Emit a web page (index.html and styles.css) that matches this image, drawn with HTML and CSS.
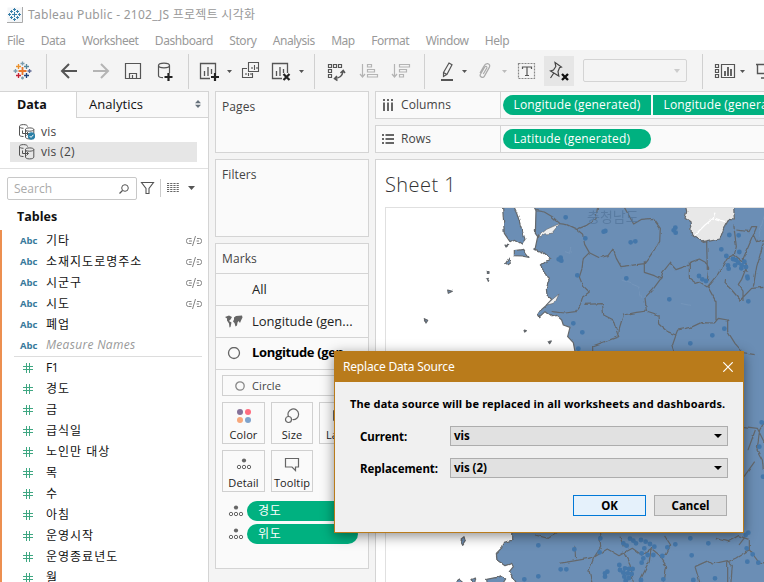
FILE: index.html
```html
<!DOCTYPE html>
<html lang="ko">
<head>
<meta charset="utf-8">
<title>Tableau Public - 2102_JS 프로젝트 시각화</title>
<link rel="stylesheet" href="styles.css">
</head>
<body>
<svg width="0" height="0" class="defs">
  <symbol id="unlink" viewBox="0 0 18 10"><path d="M6.500 2.500H3.500a2 2 0 0 0-2 2v1a2 2 0 0 0 2 2H6.500M4 5h3M12 2.500h2.500a2 2 0 0 1 2 2v1a2 2 0 0 1-2 2H12M11.500 5h2.500M10.500 0L7.500 10" fill="none" stroke="#777" stroke-width=".9"/></symbol>
  <symbol id="hash" viewBox="0 0 10 10"><path d="M3.500 0v10M6.500 0v10M0 3.500h10M0 6.500h10" fill="none" stroke="#3fa782"/></symbol>
  <symbol id="detail" viewBox="0 0 16 12"><circle cx="8" cy="2.500" r="2.100" fill="#666"/><g fill="none" stroke="#666"><circle cx="3" cy="9" r="1.700"/><circle cx="8" cy="9" r="1.700"/><circle cx="13" cy="9" r="1.700"/></g></symbol>
  <symbol id="source" viewBox="0 0 16 16"><g fill="none" stroke="#555"><path d="M4.500 12.500C2 12.500.5 12 .5 11V2.500C.5 1.300 2 .6 4.500.6s4 .7 4 1.900M.5 2.500c0 1 1.500 1.800 4 1.800"/><path d="M6.500 5.500c0-1 1.600-1.600 4-1.600s4.300.6 4.300 1.600v7.500c0 1.200-1.800 1.900-4.300 1.900s-4-.7-4-1.900V5.500c0 1 1.600 1.700 4 1.700s4.300-.7 4.300-1.700M3.500 6.500v3h6M7.500 7.500l2 2-2 2"/></g></symbol>
</svg>

<header class="titlebar">
  <svg width="16" height="16" viewBox="0 0 16 16"><rect x=".5" y=".5" width="15" height="15" fill="#f4f6f8"/><path d="M15.500 0v15.500H0" fill="none" stroke="#aaa"/><path d="M7.500 5v5M5 7.500h5M7.500 1v3M6 2.500h3M7.500 11v3M6 12.500h3M2.500 6v3M1 7.500h3M12.500 6v3M11 7.500h3M4.500 3v3M3 4.500h3M10.500 3v3M9 4.500h3M4.500 9v3M3 10.500h3M10.500 9v3M9 10.500h3" stroke="#3a80aa" fill="none"/></svg>
  <span class="title">Tableau Public - 2102_JS 프로젝트 시각화</span>
</header>
<nav class="menu"><span>File</span><span>Data</span><span>Worksheet</span><span>Dashboard</span><span>Story</span><span>Analysis</span><span>Map</span><span>Format</span><span>Window</span><span>Help</span></nav>

<div class="toolbar">
  <svg width="46" height="41" viewBox="0 50 46 41"><g fill="none" stroke-width="1.300"><path d="M22.500 67v8M18.500 71h8" stroke="#e8762c" stroke-width="1.800"/><path d="M18.500 64v5M16 66.500h5" stroke="#eb912c"/><path d="M26.500 64v5M24 66.500h5" stroke="#59879b"/><path d="M18.500 73v5M16 75.500h5" stroke="#c72035"/><path d="M26.500 73v5M24 75.500h5" stroke="#1f447e"/><path d="M22.500 61.500v4M20.500 63.500h4M15.500 69v4M13.500 71h4" stroke="#7b9cae"/><path d="M29.500 69v4M27.500 71h4" stroke="#5c6692"/><path d="M22.500 76.500v3M21 78h3" stroke="#7b9cae"/></g></svg>
  <i class="sep"></i>
  <svg width="141" height="41" viewBox="47 50 141 41"><g fill="none" stroke="#555"><path d="M77 71H62M69 64l-7 7 7 7" stroke-width="2"/><path d="M93 71h15M101 64l7 7-7 7" stroke="#b4b4b4" stroke-width="2"/><path d="M125.500 63.500h15v15h-15zM129.500 78v-4.500h7V78M132.500 75v3" stroke-width="1.200"/><path d="M158.500 65.500v10c0 1.400 2 2.100 4.500 2.100M169.500 65.500V73" stroke-width="1.200"/><ellipse cx="164" cy="65.500" rx="5.500" ry="2.300" stroke-width="1.200"/><path d="M168.500 73v8M164.500 77h8" stroke="#222" stroke-width="2.200"/></g></svg>
  <i class="sep"></i>
  <svg width="125" height="41" viewBox="189 50 125 41"><g fill="none" stroke="#555" stroke-width="1.300"><path d="M210 78.500h-9.500v-15h15V73M204.500 71v5M208 67v9M211.500 69v5"/><path d="M215 73v8M211 77h8" stroke="#222" stroke-width="2.200"/><path d="M248.500 62.500h10v9h-10zM247 68.500h-4.500v9h10V73M252 69v-2M254.500 70v-5M257 69v-2M246 75v-2M248.500 76v-3M251 75v-2" stroke-width="1.100"/><path d="M282 78.500h-9.500v-15h15V73M276.500 71v5M280 67v9M283.500 69v4"/><path d="M283.500 74l6 6M289.500 74l-6 6" stroke="#222" stroke-width="2.200"/></g><path d="M227 70h5l-2.500 3zM299 70h5l-2.500 3z" fill="#555"/></svg>
  <i class="sep"></i>
  <svg width="109" height="41" viewBox="315 50 109 41"><g fill="none" stroke="#555" stroke-width="1.200"><path d="M328.500 64.500h3v3h-3zM333.500 64.500h3v3h-3zM338.500 64.500h3v3h-3zM328.500 69.500h3v3h-3zM328.500 74.500h3v3h-3z"/><path d="M335 78.500c5-.5 7.500-3.500 8-7M340.500 73l2.700-2.500 1.800 2.500M337 76l-2.500 2.700 3 1.800" stroke-width="1.500"/><g stroke="#b4b4b4"><path d="M362.500 64v13M360 74l2.500 3 2.500-3M367.500 64.500h4v2.500h-4zM367.500 69.500h7V72h-7zM367.500 74.500h10V77h-10zM394.500 64v13M392 74l2.500 3 2.500-3M399.500 64.500h10V67h-10zM399.500 69.500h7V72h-7zM399.500 74.500h4V77h-4z"/></g></g></svg>
  <i class="sep"></i>
  <svg width="119" height="41" viewBox="425 50 119 41"><g fill="none" stroke="#555" stroke-width="1.200"><path d="M443.500 72.500l5.500-9.500 3 1.800-5 9.500-3.500 2.200zM443.500 72.500l3.500 2"/><path d="M441 80h12" stroke-width="2"/><path d="M480 73l4-7c1-2 2-2.600 4-2.300 2 .6 2 2.300 1.300 3.700l-5 9c-1.300 2-5 .5-4-1.900l4.500-7.500c1-1.300 2.600-.4 2 1l-3.500 6" stroke="#aaa"/><path d="M518.500 63.500h16v15h-16z" stroke="#888" stroke-dasharray="2 1"/><path d="M522.500 69v-2h9v2M527 67v8.500M525 75.500h4"/></g><path d="M462 70h5l-2.500 3z" fill="#555"/><path d="M502 70h5l-2.500 3z" fill="#bbb"/></svg>
  <svg class="pinned" width="30" height="30" viewBox="544 56 30 30"><path d="M555 62.500l6.500 4.500-2 .8-1.500 3.700.8 4.500-8.300-5 3-1 2.300-3.500zM553.500 73.500l-3 4.500" fill="none" stroke="#444" stroke-width="1.200"/><path d="M562 74l6 6M568 74l-6 6" stroke="#111" stroke-width="2.300"/></svg>
  <div class="fit"><i></i></div>
  <i class="sep"></i>
  <svg width="61" height="41" viewBox="703 50 61 41"><g fill="none" stroke="#555" stroke-width="1.200"><path d="M715.500 64.500h3v3h-3zM715.500 69.500h3v3h-3zM715.500 74.500h3v3h-3zM721.500 64.500h13v13h-13z"/><path d="M725 71v5M728 67v9M731 69v7" stroke-width="1.800"/><path d="M756 64.500h10M757.500 65v8.500h8M761 78h5" stroke-width="1.400"/></g><path d="M740 70h5l-2.500 3z" fill="#555"/></svg>
</div>

<main class="work">
  <aside class="side">
    <div class="tabs"><div class="tab on">Data</div><div class="tab off"><span>Analytics</span><svg width="6" height="8" viewBox="0 0 6 8"><path d="M0 3.300h6L3 0zM0 4.700h6L3 8z" fill="#66717b"/></svg></div></div>
    <div class="sources">
      <div class="src"><svg width="16" height="16"><use href="#source"/><circle cx="12.500" cy="12" r="3.700" fill="#2a7fa6"/><path d="M10.700 12l1.300 1.400 2.400-2.600" fill="none" stroke="#fff"/></svg><span>vis</span></div>
      <div class="src picked"><svg width="16" height="16"><use href="#source"/></svg><span>vis (2)</span></div>
    </div>
    <div class="find">
      <div class="search"><span>Search</span><svg width="10" height="10" viewBox="0 0 10 10"><circle cx="6" cy="4" r="3.300" fill="none" stroke="#555"/><path d="M3.500 6.500L.5 9.500" stroke="#555" stroke-width="1.300"/></svg></div>
      <svg width="56" height="24" viewBox="140 177 56 24"><path d="M141.500 182.500h12l-4.500 6v5h-3v-5z" fill="none" stroke="#555" stroke-width="1.100"/><path d="M160.500 179v18" stroke="#ccc"/><path d="M167 183.500h12M167 185.500h12M167 187.500h12M167 189.500h12M167 191.500h12" stroke="#666" stroke-dasharray="2.200 1"/><path d="M188 186h7l-3.500 4z" fill="#555"/></svg>
    </div>
    <div class="fields">
      <h2>Tables</h2>
      <div class="list">
        <div class="f"><b>Abc</b><span>기타</span><svg><use href="#unlink"/></svg></div>
        <div class="f"><b>Abc</b><span>소재지도로명주소</span><svg><use href="#unlink"/></svg></div>
        <div class="f"><b>Abc</b><span>시군구</span><svg><use href="#unlink"/></svg></div>
        <div class="f"><b>Abc</b><span>시도</span><svg><use href="#unlink"/></svg></div>
        <div class="f"><b>Abc</b><span>폐업</span></div>
        <div class="f"><b>Abc</b><em>Measure Names</em></div>
        <hr>
        <div class="f n"><svg><use href="#hash"/></svg><span class="lat">F1</span></div>
        <div class="f n"><svg><use href="#hash"/></svg><span>경도</span></div>
        <div class="f n"><svg><use href="#hash"/></svg><span>금</span></div>
        <div class="f n"><svg><use href="#hash"/></svg><span>급식일</span></div>
        <div class="f n"><svg><use href="#hash"/></svg><span>노인만 대상</span></div>
        <div class="f n"><svg><use href="#hash"/></svg><span>목</span></div>
        <div class="f n"><svg><use href="#hash"/></svg><span>수</span></div>
        <div class="f n"><svg><use href="#hash"/></svg><span>아침</span></div>
        <div class="f n"><svg><use href="#hash"/></svg><span>운영시작</span></div>
        <div class="f n"><svg><use href="#hash"/></svg><span>운영종료년도</span></div>
        <div class="f n"><svg><use href="#hash"/></svg><span>월</span></div>
      </div>
    </div>
  </aside>

  <section class="cards">
    <div class="card pages">Pages</div>
    <div class="card filters">Filters</div>
    <div class="card marks">
      <h3>Marks</h3>
      <div class="layer"><span>All</span></div>
      <div class="layer"><svg width="18" height="13" viewBox="0 0 18 13"><path d="M0 2l4-1.500L7 2 5.500 4.500 4 6l2.500 1.500-1 4.500-1 .5-.5-4L2 5.500 2 3.500zM9 2.500l2-1.500 6-.5.5 2-1.500 3-1 2.500-1.500-2-1 1.500-.5 3-1.500 1-1-3.500-1.500-1.500L9 4.500z" fill="#666"/></svg><span>Longitude (gen...</span></div>
      <div class="layer cur"><svg width="18" height="13" viewBox="0 0 18 13"><circle cx="9" cy="6" r="5.500" fill="none" stroke="#666" stroke-width="1.300"/></svg><span>Longitude (gen...</span></div>
      <div class="shape"><svg width="10" height="10" viewBox="0 0 10 10"><circle cx="5" cy="5" r="4.200" fill="none" stroke="#888" stroke-width="1.300"/></svg>Circle</div>
      <div class="props">
        <div><svg width="16" height="16" viewBox="0 0 16 16"><circle cx="4" cy="4" r="3" fill="#857199"/><circle cx="12" cy="4" r="3" fill="#ff6c7f"/><circle cx="4" cy="12" r="3" fill="#f7a77b"/><circle cx="12" cy="12" r="3" fill="#7fa3cc"/></svg>Color</div>
        <div><svg width="16" height="16" viewBox="0 0 16 16"><g fill="none" stroke="#666" stroke-width="1.200"><path d="M4.500 8.500a5.300 5.300 0 1 1 4 3"/><circle cx="4.500" cy="11.500" r="3"/></g></svg>Size</div>
        <div><svg width="16" height="16" viewBox="0 0 16 16"><path d="M1.500 2.500h13v10h-13z" fill="none" stroke="#666"/></svg>Label</div>
        <div><svg width="16" height="16" viewBox="0 -2 16 16"><use href="#detail" width="16" height="12"/></svg>Detail</div>
        <div><svg width="16" height="16" viewBox="0 0 16 16"><path d="M1.500 2.500h13v8.500h-3v3.500L8 11H1.500z" fill="none" stroke="#666" stroke-width="1.200"/></svg>Tooltip</div>
      </div>
      <div class="enc"><svg width="16" height="12"><use href="#detail"/></svg><span>경도</span></div>
      <div class="enc"><svg width="16" height="12"><use href="#detail"/></svg><span>위도</span></div>
    </div>
  </section>

  <section class="view">
    <div class="shelf"><div class="name"><svg width="12" height="12" viewBox="0 0 12 12"><path d="M2 0v2M2 3.500V12M6 0v2M6 3.500V12M10 0v2M10 3.500V12" stroke="#666" stroke-width="2"/></svg>Columns</div><div class="pills"><span class="pill left">Longitude (generated)</span><span class="pill mid">Longitude (generated)</span></div></div>
    <div class="shelf"><div class="name"><svg width="12" height="12" viewBox="0 0 12 12"><path d="M0 2h2M3.500 2H12M0 6h2M3.500 6H12M0 10h2M3.500 10H12" stroke="#666" stroke-width="2"/></svg>Rows</div><div class="pills"><span class="pill full">Latitude (generated)</span></div></div>
    <div class="sheet">
      <h1>Sheet 1</h1>
      <svg class="map" width="378" height="374" viewBox="386 208 378 374">
        <defs><filter id="coast" filterUnits="userSpaceOnUse" x="380" y="200" width="400" height="400" color-interpolation-filters="sRGB"><feTurbulence type="fractalNoise" baseFrequency=".16" numOctaves="1" seed="4"/><feDisplacementMap in="SourceGraphic" scale="3.500" xChannelSelector="R" yChannelSelector="G"/></filter></defs>
        <g filter="url(#coast)" stroke="#64686c" stroke-linejoin="round">
          <g transform="translate(375 170) scale(.33333)" stroke-width="3.600" fill="#6b8eb5">
            <path d="M472 100L483 122 481 190 488 200 480 238 500 246 528 267 508 278 496 288 512 310 522 330 514 355 516 375 530 388 512 408 496 422 489 432 494 440 510 425 530 440 545 436 560 450 565 465 585 472 578 500 595 518 600 545V1000H415L413 1110 385 1118 380 1134 364 1150 366 1170 390 1187 410 1180 415 1190 403 1205 425 1240V1300H1200V100z"/>
            <path d="M382 100L388 190 405 215 418 208 440 222 450 208 436 165 426 130 412 100z"/>
            <path d="M418 242l28-4 8 14 8 10-22-4-22-1zM392 280l10-16 4 16-8 5zM218 360l14 4-12 6zM148 446l10 5-5 8zM447 480l7 2-5 4zM521 517l8-4-5 8zM337 305h5v5h-5zM337 327l6-2-3 9zM390 225l8 2-5 4zM255 1110l12-10 4 14-8 12zM242 1238l12-8 10 8v10h-22zM288 1228l14-4-4 20zM335 1228l30-6 15-5 12 10-10 15h-45z"/>
            <path d="M930 100L935 125 930 145 945 155 950 195 985 217 1035 207 1050 165 1060 148 1078 150 1076 100z" fill="#e8e8e8"/>
            <path d="M490 198l25-20 40-18-25 30-22 2-16 12zM515 405l15-15 22-18-12 27z" fill="#efefef" stroke-width="2"/>
            <g fill="none">
              <path d="M483 122l25 4 25 15 22 20 20 3 30 14 30-12 28-20 6-46M605 178l18 15 6 30 14 25-18 18-4 30-8 25 10 25 20 20-20 15-8 24-14 20-30 4-41-4M643 248l30 15 26-6 15-20 10 28 14 25 30-4 40-5 18-24 28-42 2-40-22-30-34 3-24 14-28-50 2-40M808 274v33l30 10 20 10 5-20 22-28 18 20 28-10 14-12 28-10 18 10 10 20-4 38M995 215l2 85M858 325l-22 30-26 28 4 40 38 12 2 30 24 20 24 10 6-15 40-8 30-14 40 1 12-14 28 5v35l22 35 24 28 35 6M943 275v50l20 15 10-3 25 15M815 423l-30 4-40 8-12 40-2 25-50 18-28 10v20M628 403l54-2 4 34 28 14 16 50M903 495l-12 35 10 30M998 350l25 45v55M998 350l32-40 26-46 22-10 6-24-8-68M1052 325l-2 15 20 20 26 30 34-35 35-3M1078 255l32 25 2 18-12 30-10 15 14 20 0 30M1135 195l10-25-15 0-8 15-38-5M1135 195l10 20 25-6M1135 195l-30 70 10 40M1165 220l-20 70-10 60"/>
              <path d="M1165 900l-3-30-16-30 8-60 15-25 0-60 14-32M1107 920l32-45M1119 840l22-60M1107 770l40 5 20 40 30 30M1107 1105l-15 20M480 1095l40 10 30-20M552 1180l50-8 55-10 20-30-4-55M657 1162l40-25 35 20 40-22 28 20 30-20M735 1100l10 30M657 1162l-15 40 10 40M600 1130l2 42M745 1145l20 40 10 50M828 1135l-5 40-30 60M828 1135l25 20 22 35-8 45M867 1095l20 30-15 30M1020 1105l40 10 30-18 33 12 0 30-40 25-25 12 0 60M960 1190l40-18 12 10 45-10 15 15-5 60M960 1190l15 50M1123 1139l30 40 45 10"/>
              <path d="M1020 125l-5 20-25 20-30 30M1020 145l30 10" stroke="#fff"/>
              <path d="M1170 130l-20 70M740 330l50 20 10 30M850 220l-20 25M570 245l15 5 2-18M915 400l30 6" stroke="#7899bd" stroke-width="2"/>
            </g>
          </g>
        </g>
        <text class="region" x="587" y="222">충청남도</text>
        <g class="stops" transform="translate(375 170) scale(.33333)"><path d="M572 142h0M631 205h0M686 185h0M691 183h0M767 217h0M781 214h0M557 263h0M559 272h0M551 268h0M607 316h0M754 325h0M595 460h0M622 487h0M610 536h0M883 388h0M901 173h0M896 181h0M902 188h0M1063 195h0M1091 196h0M1039 238h0M1093 246h0M1054 258h0M1074 267h0M1083 270h0M1090 278h0M1080 286h0M1100 286h0M1108 275h0M1113 291h0M1099 295h0M1059 286h0M1061 296h0M1117 320h0M1118 325h0M972 318h0M982 328h0M993 333h0M1120 394h0M1048 476h0M1012 496h0M946 520h0M1160 757h0M1153 830h0M1164 920h0M490 1126h0M598 1138h0M674 1147h0M676 1105h0M557 1198h0M574 1198h0M490 1219h0M448 1228h0M745 1120h0M755 1127h0M765 1106h0M775 1112h0M783 1120h0M798 1110h0M812 1115h0M825 1122h0M838 1130h0M808 1135h0M800 1150h0M818 1155h0M835 1155h0M805 1165h0M800 1178h0M862 1158h0M877 1132h0M901 1123h0M946 1105h0M950 1156h0M1000 1120h0M1115 1135h0M1133 1153h0M1150 1178h0M1117 1175h0M1120 1088h0M1112 1095h0M733 1185h0M735 1200h0M750 1195h0M762 1197h0M773 1197h0M745 1208h0M758 1210h0M770 1212h0M748 1220h0M762 1224h0M752 1232h0M690 1210h0M697 1205h0M690 1220h0M865 1228h0M1020 1225h0M955 1230h0M798 1230h0"/></g>
      </svg>
    </div>
  </section>
</main>

<div class="dialog">
  <div class="bar"><span>Replace Data Source</span><svg width="10" height="10" viewBox="0 0 10 10"><path d="M.3.3l9.400 9.400M9.700.3L.3 9.700" stroke="#fff" stroke-width="1.200"/></svg></div>
  <p>The data source will be replaced in all worksheets and dashboards.</p>
  <div class="row"><label>Current:</label><div class="combo">vis<i></i></div></div>
  <div class="row"><label>Replacement:</label><div class="combo">vis (2)<i></i></div></div>
  <div class="actions"><button class="ok">OK</button><button>Cancel</button></div>
</div>
</body>
</html>
```
FILE: styles.css
```css
* { box-sizing: border-box; }
body {
  margin: 0; width: 764px; height: 582px; overflow: hidden; position: relative;
  display: flex; flex-direction: column; background: #fff; color: #333;
  font: 13px/16px "Open Sans", "Noto Sans CJK KR", sans-serif; white-space: nowrap;
}
h1, h2, h3, p { margin: 0; font-weight: normal; }
svg { flex: none; display: block; }
.defs { position: absolute; }

.titlebar { height: 30px; flex: none; display: flex; align-items: center; padding-left: 7px; gap: 5px; color: #999; font-size: 12px; }
.title { font-family: "Noto Sans", "Noto Sans CJK KR", sans-serif; font-weight: 400; letter-spacing: .27px; }
.menu { height: 20px; flex: none; display: flex; align-items: center; gap: 16.400px; padding: 1px 0 0 7px; color: #999; font: 12px/20px "Noto Sans", sans-serif; letter-spacing: -.45px; }
.toolbar { height: 41px; flex: none; display: flex; align-items: center; background: #f4f4f4; }
.sep { width: 1px; height: 35px; background: #d0d0d0; flex: none; margin-top: 2px; }
.pinned { background: #e6e6e6; }
.fit { width: 104px; height: 23px; margin: 0 15px 0 9px; border: 1px solid #d4d4d4; border-radius: 2px; flex: none; display: flex; justify-content: flex-end; align-items: center; padding-right: 6px; }
.fit i { border: 3px solid transparent; border-top: 4px solid #ccc; border-bottom: 0; }

.work { height: 491px; display: flex; background: #f4f4f4; }
.side { width: 209px; flex: none; background: #fff; border-right: 1px solid #d4d4d4; }
.tabs { display: flex; height: 27px; border-top: 1px solid #d4d4d4; }
.tab { height: 26px; line-height: 25px; color: #111; }
.on { width: 76px; padding-left: 17px; font-weight: 700; font-size: 12.500px; }
.off { flex: 1; border-left: 1px solid #d4d4d4; border-bottom: 1px solid #d4d4d4; background: #f9f9f9; display: flex; justify-content: space-between; align-items: center; padding: 0 7px 0 12px; letter-spacing: .05px; }
.off svg { margin-bottom: 1px; }
.sources { height: 51px; padding: 4px 11px 0 10px; border-bottom: 1px solid #e0e0e0; }
.src { height: 20px; display: flex; align-items: center; gap: 6px; padding-left: 9px; font-size: 12px; color: #444; letter-spacing: .3px; }
.picked { background: #e6e6e6; }
.find { display: flex; padding: 8px 0 0 7px; height: 32px; gap: 3px; }
.search { width: 130px; height: 23px; border: 1px solid #c8c8c8; border-radius: 2px; display: flex; justify-content: space-between; align-items: center; padding: 0 7px 0 6px; color: #aaa; font-size: 12px; }
.fields h2 { height: 29px; padding-left: 17px; font: 700 12.500px/31px "Open Sans", sans-serif; color: #111; }
.list { height: 352px; border-left: 2px solid #ec8f50; overflow: hidden; }
.f { height: 21px; display: flex; align-items: center; padding: 0 5px 0 18px; color: #111; font-size: 12px; }
.f b { width: 26px; font: 700 9.500px/20px "Open Sans", sans-serif; color: #38799b; }
.f em { font-size: 12px; color: #999; letter-spacing: .3px; padding-bottom: 1px; }
.f svg { width: 18px; height: 10px; margin-left: auto; margin-top: 1px; }
.f span { letter-spacing: 1px; }
.f .lat { letter-spacing: -.5px; }
.n svg { width: 10px; height: 10px; margin: 0 13px 0 3px; }
.list hr { height: 1px; border: 0; margin: 0 6px 0 12px; background: #ddd; }

.cards { width: 160px; flex: none; padding-left: 6px; }
.card { width: 154px; border: 1px solid #d4d4d4; background: #fafafa; font-size: 12px; color: #444; padding: 7px 6px; letter-spacing: .1px; }
.pages { height: 62px; }
.filters { height: 78px; margin: 6px 0; }
.marks { height: 326px; padding: 0; }
.marks h3 { height: 30px; font-size: 12px; line-height: 30px; padding-left: 6px; border-bottom: 1px solid #d4d4d4; }
.layer { height: 32px; display: flex; align-items: center; border-bottom: 1px solid #d4d4d4; padding-left: 9px; font-size: 13px; color: #222; letter-spacing: 0; }
.layer span { margin-left: 9px; padding-bottom: 2px; }
.layer span:first-child { margin-left: 27px; }
.cur { font-weight: 700; color: #000; letter-spacing: -.35px; }
.cur span { padding-bottom: 4px; }
.shape { height: 21px; margin: 5px 6px 6px; border: 1px solid #d0d0d0; display: flex; align-items: center; gap: 7px; padding-left: 12px; font-size: 11px; }
.props { display: grid; grid-template-columns: 43px 42px 42px; gap: 6px; margin-left: 6px; }
.props div { height: 42px; border: 1px solid #d0d0d0; display: flex; flex-direction: column; align-items: center; padding-top: 5px; gap: 3px; font-size: 11px; line-height: 15px; color: #222; }
.enc { display: flex; align-items: center; height: 20px; margin: 9px 10px 0 12px; gap: 3px; }
.enc + .enc { margin-top: 3px; }
.enc span { flex: 1; height: 20px; border-radius: 10px; background: #00b180; color: #fff; padding-left: 11px; line-height: 19px; font-size: 12px; letter-spacing: .7px; }

.view { width: 389px; margin-left: 6px; flex: none; }
.shelf { height: 28px; margin-bottom: 6px; border: solid #d4d4d4; border-width: 1px 0 1px 1px; display: flex; background: #fafafa; }
.name { width: 125px; flex: none; border-right: 1px solid #d4d4d4; display: flex; align-items: center; gap: 7px; padding-left: 6px; font-size: 12px; color: #444; letter-spacing: .1px; }
.pills { display: flex; gap: 2px; padding: 3px 0 0 2px; overflow: hidden; }
.pill { width: 148px; height: 20px; flex: none; background: #00b180; color: #fff; font-size: 12px; line-height: 20px; padding-left: 10.500px; letter-spacing: .16px; }
.left { border-radius: 10px 0 0 10px; }
.full { border-radius: 10px; }
.sheet { height: 423px; border: solid #d4d4d4; border-width: 1px 0 0 1px; background: #fff; padding-left: 9px; }
.sheet h1 { height: 47px; font: 300 20px/50px "Open Sans", sans-serif; color: #333; letter-spacing: .45px; }
.map { border: solid #e0e0e0; border-width: 1px 0 0 1px; box-sizing: content-box; }
.region { font: 14px "Noto Sans CJK KR", sans-serif; fill: #527499; opacity: .7; }
.stops path { stroke: #4477aa; stroke-width: 14.500; stroke-linecap: round; }

.dialog { position: absolute; left: 334px; top: 351px; width: 410px; height: 182px; background: #f0f0f0; border: 1px solid #b97b1b; box-shadow: 0 3px 12px rgba(0,0,0,.45); color: #000; font: 700 11.500px/16px "Noto Sans", sans-serif; }
.bar { height: 30px; background: #b97b1b; display: flex; align-items: center; justify-content: space-between; padding: 0 10px 0 8px; color: #fff; font-weight: 400; font-size: 12px; letter-spacing: -.2px; }
.dialog p { padding: 14px 0 0 15px; height: 45px; font-weight: 700; font-size: 11px; letter-spacing: .15px; }
.row { display: flex; align-items: center; height: 20px; margin: 0 15px 12px 25px; letter-spacing: -.05px; }
.row:nth-child(3) { margin-top: -1px; }
.row label { width: 90px; padding-top: 2px; }
.combo { flex: 1; height: 20px; border: 1px solid #adadad; background: #e1e1e1; padding-left: 3px; line-height: 20px; display: flex; justify-content: space-between; align-items: center; padding-right: 5px; }
.combo i { border: 4px solid transparent; border-top-color: #000; border-bottom: 0; }
.actions { display: flex; justify-content: flex-end; gap: 8px; padding: 5px 16px 0 0; }
button { width: 73px; height: 21px; border: 1px solid #adadad; background: #e1e1e1; font: inherit; color: #000; padding: 0; }
.ok { border-color: #0078d7; background: #e5f1fb; }
```
